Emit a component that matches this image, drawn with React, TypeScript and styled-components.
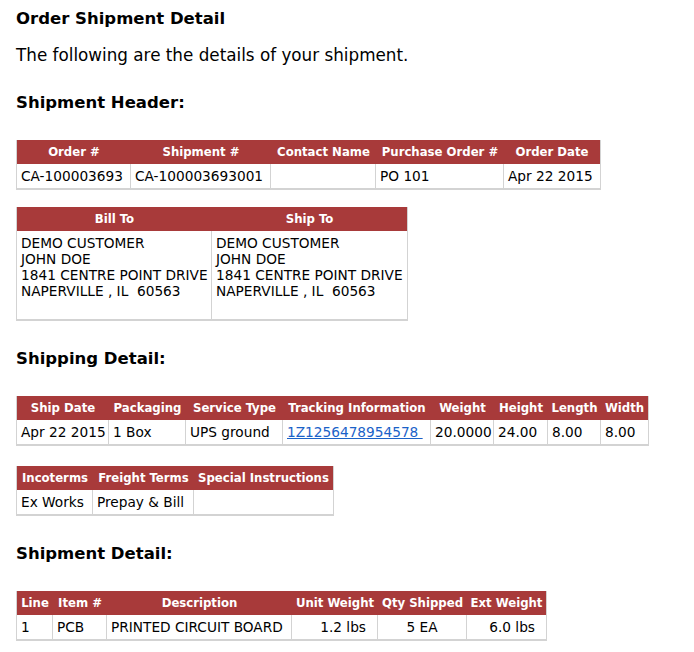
import styled, { createGlobalStyle } from "styled-components";

const GlobalStyle = createGlobalStyle`
  body {
    margin: 0;
    background: #ffffff;
    font-family: "DejaVu Sans", Verdana, sans-serif;
    color: #000000;
  }
`;

interface Column {
  label: string;
  width: number;
  align?: "left" | "center" | "right";
}

const headerColumns: Column[] = [
  { label: "Order #", width: 114 },
  { label: "Shipment #", width: 140 },
  { label: "Contact Name", width: 105 },
  { label: "Purchase Order #", width: 128 },
  { label: "Order Date", width: 96 },
];

const addressColumns: Column[] = [
  { label: "Bill To", width: 195 },
  { label: "Ship To", width: 195 },
];

const shippingColumns: Column[] = [
  { label: "Ship Date", width: 92 },
  { label: "Packaging", width: 77 },
  { label: "Service Type", width: 97 },
  { label: "Tracking Information", width: 148 },
  { label: "Weight", width: 63 },
  { label: "Height", width: 54 },
  { label: "Length", width: 53 },
  { label: "Width", width: 47 },
];

const termsColumns: Column[] = [
  { label: "Incoterms", width: 76 },
  { label: "Freight Terms", width: 101 },
  { label: "Special Instructions", width: 139 },
];

const lineColumns: Column[] = [
  { label: "Line", width: 36 },
  { label: "Item #", width: 54 },
  { label: "Description", width: 185 },
  { label: "Unit Weight", width: 86, align: "right" },
  { label: "Qty Shipped", width: 89, align: "center" },
  { label: "Ext Weight", width: 79, align: "right" },
];

const address = ["DEMO CUSTOMER", "JOHN DOE", "1841 CENTRE POINT DRIVE", "NAPERVILLE , IL  60563"];

const DataTable = ({
  columns,
  rows,
  gap,
}: {
  columns: Column[];
  rows: React.ReactNode[][];
  gap?: number;
}) => {
  const total = columns.reduce((sum, c) => sum + c.width, 0);
  return (
    <Table $width={total} $gap={gap ?? 0}>
      <colgroup>
        {columns.map((c) => (
          <col key={c.label} style={{ width: c.width }} />
        ))}
      </colgroup>
      <thead>
        <tr>
          {columns.map((c) => (
            <HeadCell key={c.label}>{c.label}</HeadCell>
          ))}
        </tr>
      </thead>
      <tbody>
        {rows.map((row, i) => (
          <tr key={i}>
            {row.map((cell, j) => (
              <Cell key={j} $align={columns[j].align ?? "left"}>
                {cell}
              </Cell>
            ))}
          </tr>
        ))}
      </tbody>
    </Table>
  );
};

const AddressBlock = () => (
  <>
    {address.map((line) => (
      <div key={line}>{line.replace(/  /g, "\u00a0 ")}</div>
    ))}
    <br />
  </>
);

const App = () => {
  return (
    <>
      <GlobalStyle />
      <Page>
        <Title>Order Shipment Detail</Title>
        <Intro>The following are the details of your shipment.</Intro>

        <SectionTitle>Shipment Header:</SectionTitle>
        <DataTable
          columns={headerColumns}
          gap={17}
          rows={[["CA-100003693", "CA-100003693001", "", "PO 101", "Apr 22 2015"]]}
        />
        <DataTable columns={addressColumns} rows={[[<AddressBlock />, <AddressBlock />]]} />

        <SectionTitle>Shipping Detail:</SectionTitle>
        <DataTable
          columns={shippingColumns}
          gap={20}
          rows={[
            [
              "Apr 22 2015",
              "1 Box",
              "UPS ground",
              <TrackLink href="#">1Z1256478954578&nbsp;</TrackLink>,
              "20.0000",
              "24.00",
              "8.00",
              "8.00",
            ],
          ]}
        />
        <DataTable columns={termsColumns} rows={[["Ex Works", "Prepay & Bill", ""]]} />

        <SectionTitle>Shipment Detail:</SectionTitle>
        <DataTable
          columns={lineColumns}
          rows={[["1", "PCB", "PRINTED CIRCUIT BOARD", "1.2 lbs", "5 EA", "6.0 lbs"]]}
        />
      </Page>
    </>
  );
};

export default App;

const Page = styled.div`
  display: flex;
  flex-direction: column;
  align-items: flex-start;
  padding: 8px 16px 12px;
`;

const Title = styled.h1`
  margin: 0;
  font-size: 16.5px;
  line-height: 21px;
  font-weight: bold;
`;

const Intro = styled.p`
  margin: 16px 0 0;
  font-size: 16.8px;
  line-height: 20px;
`;

const SectionTitle = styled.h2`
  margin: 28px 0 27px;
  font-size: 16.5px;
  line-height: 20px;
  font-weight: bold;
`;

const Table = styled.table<{ $width: number; $gap: number }>`
  width: ${(p) => p.$width}px;
  table-layout: fixed;
  border-collapse: separate;
  border-spacing: 0;
  border: 1px solid #d3d3d3;
  border-top: none;
  margin-bottom: ${(p) => p.$gap}px;
  font-size: 13.7px;
  line-height: 16px;
`;

const HeadCell = styled.th`
  background: #a83a3a;
  color: #ffffff;
  font-family: "DejaVu Sans Condensed", "DejaVu Sans", sans-serif;
  font-stretch: condensed;
  font-weight: bold;
  font-size: 13px;
  text-align: center;
  padding: 4px 3px;
  white-space: nowrap;
  overflow: hidden;
`;

const Cell = styled.td<{ $align: string }>`
  padding: 4px;
  padding-right: ${(p) => (p.$align === "right" ? "11px" : "4px")};
  text-align: ${(p) => p.$align};
  vertical-align: top;
  border-right: 1px solid #d3d3d3;
  border-bottom: 1px solid #d3d3d3;
  white-space: nowrap;
  &:last-child {
    border-right: none;
  }
`;

const TrackLink = styled.a`
  color: #1a62c8;
  text-decoration: underline;
`;
